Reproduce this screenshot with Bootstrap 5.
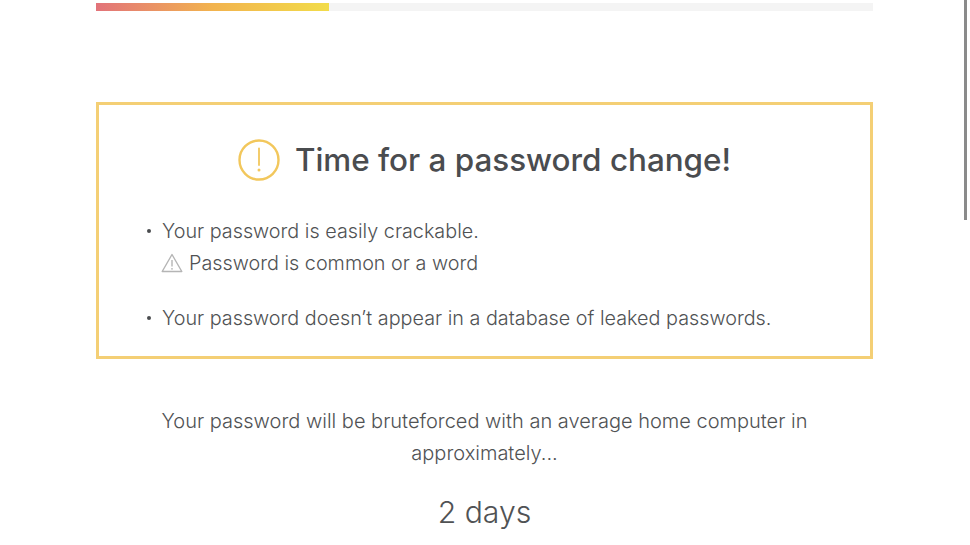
<!DOCTYPE html>
<html lang="en">
<head>
<meta charset="utf-8">
<title>Password check</title>
<link href="https://cdn.jsdelivr.net/npm/bootstrap@5.3.0/dist/css/bootstrap.min.css" rel="stylesheet">
<style>
html,body{height:545px;overflow:hidden;background:#fff}
body{font-family:"Inter","Liberation Sans",sans-serif;font-weight:300;color:#505254;font-size:19.8px;line-height:32px;position:relative}
.page-wrap{width:777px;margin-left:96px;padding-top:3px}
.meter{height:8px;background:#f4f4f4}
.meter-fill{width:30%;height:100%;background:linear-gradient(90deg,#e2737a,#f2b34e 50%,#f2dc4a)}
.notice{margin-top:91px;height:257px;border:3px solid #f4cf75;padding:0 46px}
.notice-title{font-size:31.4px;line-height:42px;font-weight:500;color:#4a4c4f;margin:0;padding-top:34px;gap:15px}
.notice-list{margin:34px 0 0;padding:0}
.notice-item{gap:11px;padding-left:2px}
.dot{width:4px;height:4px;border-radius:50%;background:#4a4c4f;flex:none;margin-top:14px}
.sub-line{gap:6px;margin-left:16px}
.item-gap{margin-top:23px}
.result-text{margin-top:46px;padding:0 50px;font-size:20px}
.result-value{font-size:30.2px;line-height:40px;margin-top:23px}
.thumb{position:absolute;left:964px;top:0;width:3px;height:220px;background:#8a8a8a}
</style>
</head>
<body>
<div class="page-wrap">
  <div class="meter"><div class="meter-fill"></div></div>
  <div class="notice">
    <h1 class="notice-title d-flex justify-content-center align-items-center">
      <svg width="42" height="42" viewBox="0 0 42 42" aria-hidden="true"><circle cx="21" cy="21" r="19.5" fill="none" stroke="#f2c75c" stroke-width="2.4"/><path d="M21 9.5V26" stroke="#f2c75c" stroke-width="1.8" stroke-linecap="round"/><circle cx="21" cy="31" r="1.5" fill="#f2c75c"/></svg>
      <span>Time for a password change!</span>
    </h1>
    <div class="notice-list">
      <div class="notice-item d-flex"><span class="dot"></span><span>Your password is easily crackable.</span></div>
      <div class="sub-line d-flex align-items-center">
        <svg width="22" height="20" viewBox="0 0 22 20" aria-hidden="true"><path d="M11 1.5 20.8 18.5H1.2Z" fill="none" stroke="#b5b5b5" stroke-width="1.4" stroke-linejoin="round"/><path d="M11 7v6.5" stroke="#b5b5b5" stroke-width="1.4"/><circle cx="11" cy="15.8" r=".9" fill="#b5b5b5"/></svg>
        <span>Password is common or a word</span>
      </div>
      <div class="notice-item item-gap d-flex"><span class="dot"></span><span>Your password doesn’t appear in a database of leaked passwords.</span></div>
    </div>
  </div>
  <p class="result-text text-center mb-0">Your password will be bruteforced with an average home computer in approximately...</p>
  <div class="result-value text-center">2 days</div>
</div>
<div class="thumb"></div>
<script src="https://cdn.jsdelivr.net/npm/bootstrap@5.3.0/dist/js/bootstrap.bundle.min.js"></script>
</body>
</html>
